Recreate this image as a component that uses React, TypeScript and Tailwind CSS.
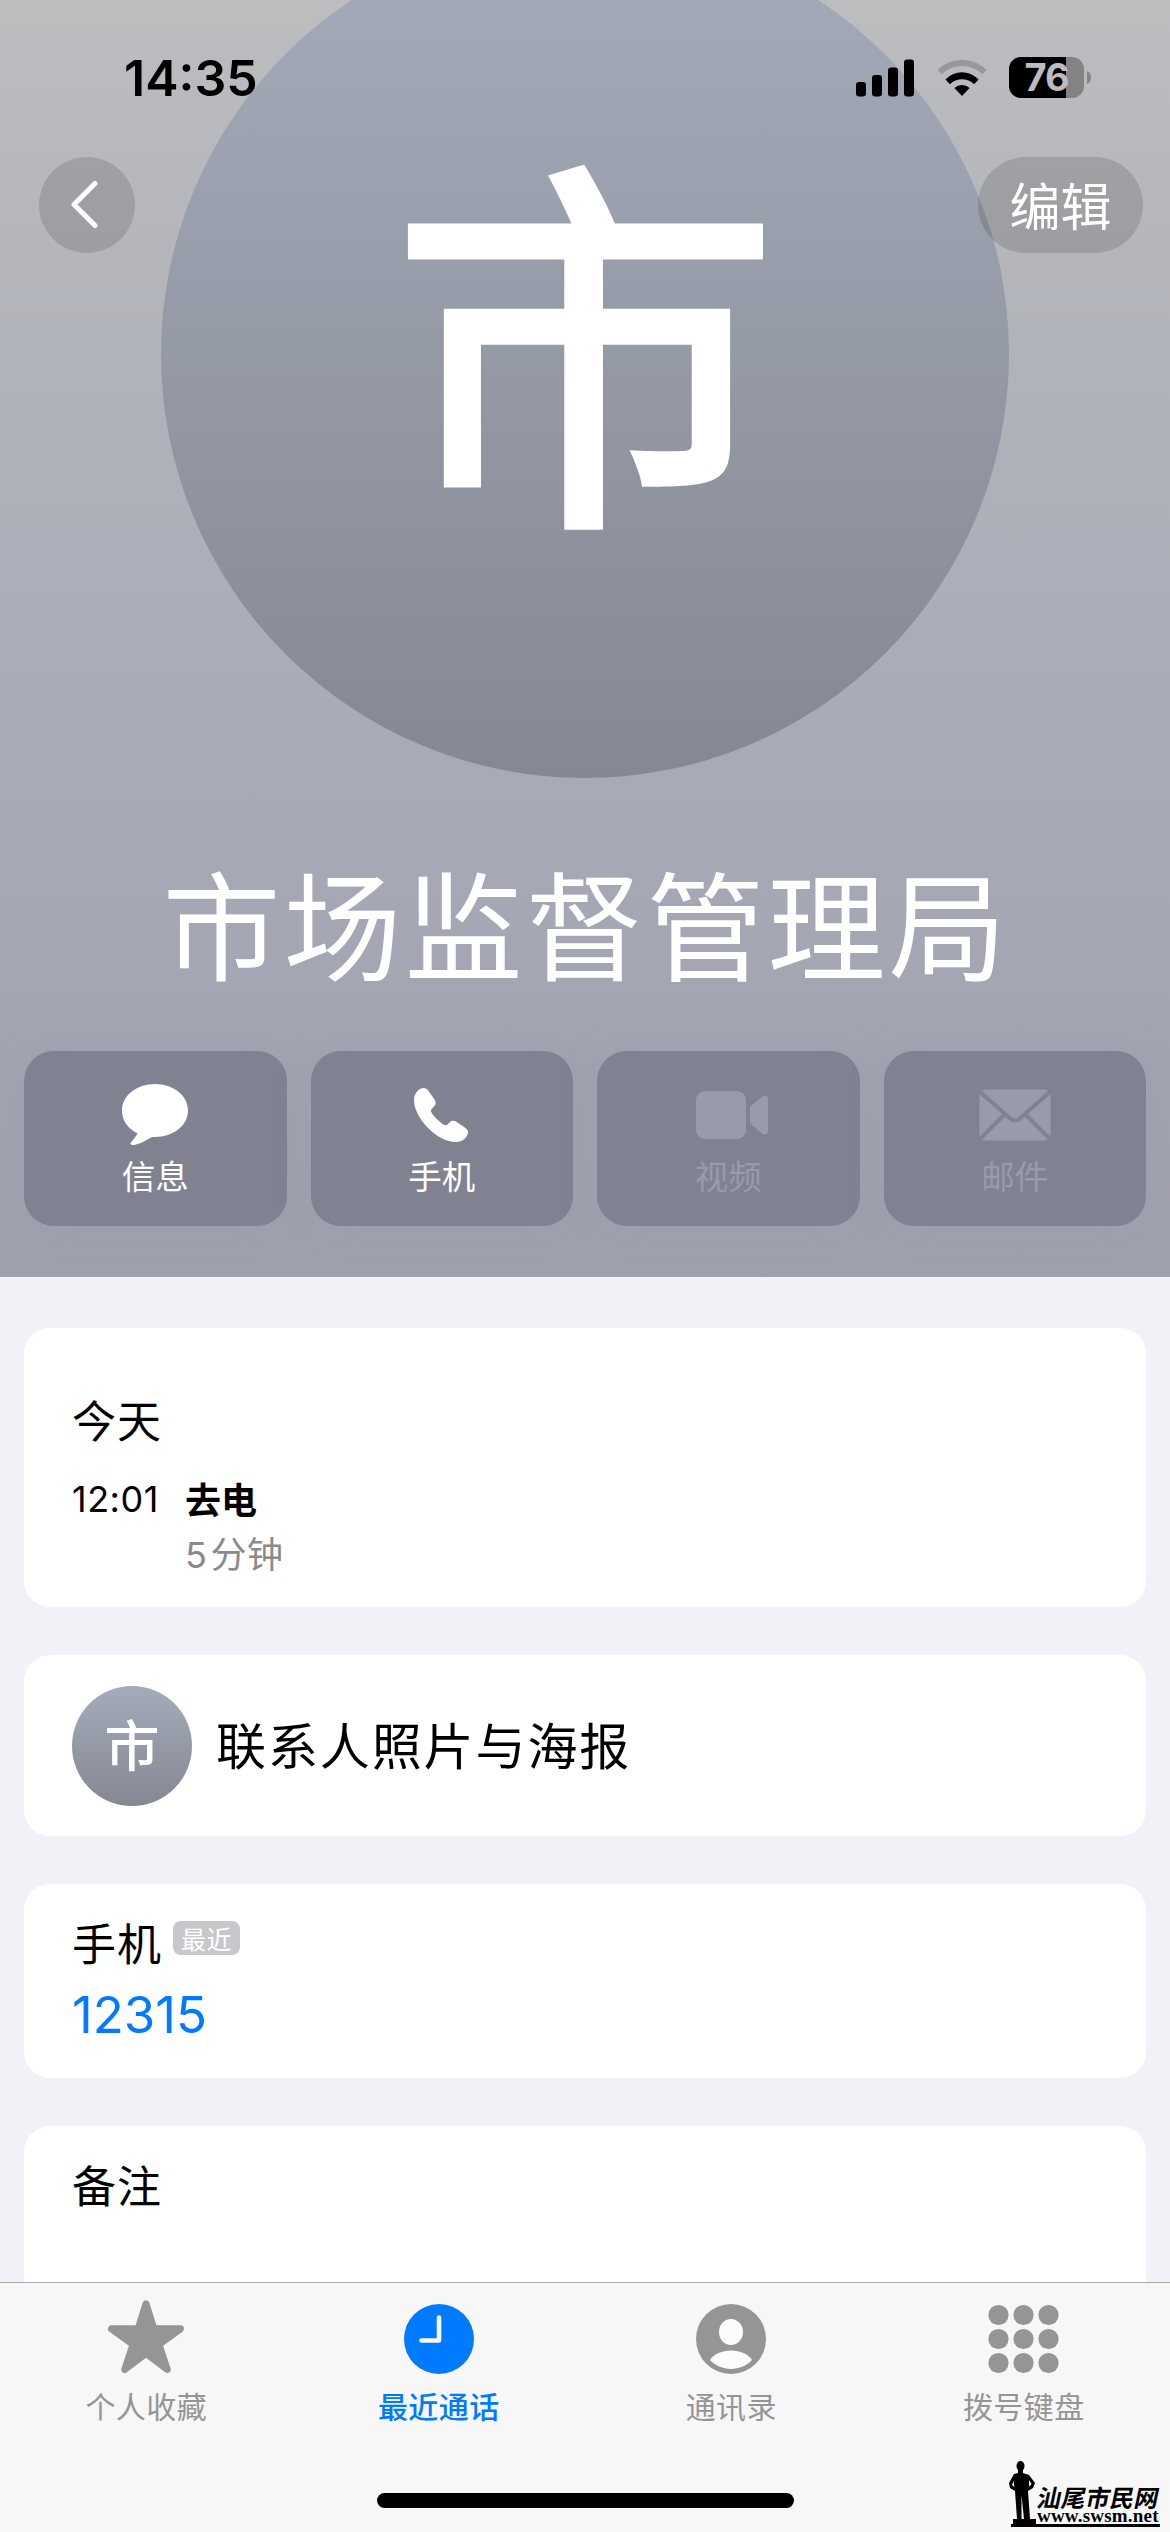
import React from "react";

const CJK = "font-['Noto_Sans_CJK_SC',sans-serif]";

function SignalIcon() {
  return (
    <svg className="h-[38px] w-[58px]" viewBox="0 0 58 38" fill="#000">
      <rect x="0" y="23" width="10" height="14.500" rx="3" />
      <rect x="16" y="16" width="10" height="21.500" rx="3" />
      <rect x="32" y="8.500" width="10" height="29" rx="3" />
      <rect x="48" y="0.500" width="10" height="37" rx="3" />
    </svg>
  );
}

function WifiIcon() {
  return (
    <svg className="h-[38px] w-[50px]" viewBox="0 0 50 38">
      <path d="M0.500 11 A34.500 34.500 0 0 1 49.500 11 L45.200 15.300 A28.500 28.500 0 0 0 4.800 15.300 Z" fill="#98989c" />
      <path d="M9 20.500 A22.500 22.500 0 0 1 41 20.500 L37 24.700 A17 17 0 0 0 13 24.700 Z" fill="#000" stroke="#000" strokeWidth="1" strokeLinejoin="round" />
      <path d="M17.400 29 A11 11 0 0 1 32.600 29 L25 37 Z" fill="#000" />
    </svg>
  );
}

function Battery() {
  return (
    <div className="flex items-center">
      <div className="flex h-[41px] w-[75px] items-center justify-center rounded-[12px] bg-[linear-gradient(to_right,#000_57px,#838386_57px)]">
        <span className="font-['Inter',sans-serif] text-[38px] leading-[41px] font-bold tracking-[-1px] text-[#bbbbc0]">76</span>
      </div>
      <svg className="ml-[3px] h-[13px] w-[4px]" viewBox="0 0 4 13">
        <path d="M0 0 C2.500 1 4 3.500 4 6.500 C4 9.500 2.500 12 0 13 Z" fill="#858588" />
      </svg>
    </div>
  );
}

function MessageIcon() {
  return (
    <svg className="h-[62px] w-[68px]" viewBox="0 0 68 62" fill="#fff">
      <path d="M34 0 C52.500 0 67 11.600 67 26.500 C67 41.400 52.500 53 34 53 C32.500 53 31 52.900 30 53.500 C25 56.500 18 60.500 12 61 C9.500 61.200 8.900 59.500 10.200 58 C13 55 15.200 52 16.500 49.500 C7 44.700 1 36.500 1 26.500 C1 11.600 15.500 0 34 0 Z" />
    </svg>
  );
}

function PhoneIcon() {
  return (
    <svg className="mr-[2px] h-[56px] w-[56px]" viewBox="0 0 56 56" fill="#fff">
      <path d="M1 13 C1 6 6 1 10.500 1 C13 1 14.500 2.500 15.500 4 L21.500 12.500 C23 15 23 17 21.500 19 L18.500 22 C17.500 23.200 18 24.500 18.500 25.500 C20.500 29 26.500 35 30.500 37.500 C32 38.500 33.500 38.500 34.500 37.500 L37 35 C38.500 33.500 41 33.500 43 34.500 L52.500 41 C54.500 42.500 55.200 44 55 46 C54 51 49 55 43 55 C24 55 1 31 1 13 Z" />
    </svg>
  );
}

function VideoIcon() {
  return (
    <svg className="ml-[7px] h-[50px] w-[74px]" viewBox="0 0 74 50" fill="#989ba9">
      <rect x="1" y="1" width="50" height="48" rx="9" />
      <path d="M55 17 L67 6.500 C70 4.500 73 5.500 73 9 V41 C73 44.500 70 45.500 67 43.500 L55 33.500 Z" />
    </svg>
  );
}

function MailIcon() {
  return (
    <svg className="h-[52px] w-[72px]" viewBox="0 0 72 52">
      <rect x="0.500" y="0.500" width="71" height="51" rx="6" fill="#989ba9" />
      <path d="M0 2 L30 28.500 C34 32.500 38 32.500 42 28.500 L72 2 M0 51 L25.500 25.500 M72 51 L46.500 25.500" fill="none" stroke="#808292" strokeWidth="4" />
    </svg>
  );
}

type Action = { label: string; icon: React.ReactNode; on: boolean };

const actions: Action[] = [
  { label: "信息", icon: <MessageIcon />, on: true },
  { label: "手机", icon: <PhoneIcon />, on: true },
  { label: "视频", icon: <VideoIcon />, on: false },
  { label: "邮件", icon: <MailIcon />, on: false },
];

function StarIcon() {
  return (
    <svg className="h-[76px] w-[78px]" viewBox="0 0 78 76" fill="#959595" stroke="#959595" strokeWidth="7" strokeLinejoin="round">
      <path d="M39 3.800 L46.800 28.500 L73.500 28.800 L52 44.500 L60.300 69.500 L39 53.500 L17.700 69.500 L26 44.500 L4.500 28.800 L31.200 28.500 Z" />
    </svg>
  );
}

function ClockIcon() {
  return (
    <svg className="h-[76px] w-[70px]" viewBox="0 0 70 76">
      <circle cx="35" cy="39" r="35" fill="#007aff" />
      <path d="M35 17.500 V40.500 H17.500" fill="none" stroke="#f7f7f7" strokeWidth="4.600" strokeLinecap="round" strokeLinejoin="round" />
    </svg>
  );
}

function PersonIcon() {
  return (
    <svg className="h-[76px] w-[70px]" viewBox="0 0 70 76">
      <circle cx="35" cy="39" r="35" fill="#959595" />
      <ellipse cx="35" cy="32" rx="12" ry="13" fill="#fcfcfc" />
      <path d="M14 60 C18 54 26 50.500 35 50.500 C44 50.500 52 54 56 60 C51 65.500 43 69 35 69 C27 69 19 65.500 14 60 Z" fill="#fcfcfc" />
    </svg>
  );
}

function KeypadIcon() {
  const at = [10.500, 35.500, 60.500];
  return (
    <svg className="h-[76px] w-[71px]" viewBox="0 0 71 76" fill="#959595">
      {[15, 39, 63].map((y) => at.map((x) => <circle key={`${x}-${y}`} cx={x} cy={y} r="10.100" />))}
    </svg>
  );
}

const tabs = [
  { label: "个人收藏", icon: <StarIcon />, active: false },
  { label: "最近通话", icon: <ClockIcon />, active: true },
  { label: "通讯录", icon: <PersonIcon />, active: false },
  { label: "拨号键盘", icon: <KeypadIcon />, active: false },
];

function Watermark() {
  return (
    <div className="absolute right-[10px] bottom-[5px] flex h-[67px] w-[151px] flex-col">
      <div className="flex flex-1 items-end">
        <svg className="h-[63px] w-[28px] shrink-0" viewBox="0 0 28 63" fill="#000">
          <ellipse cx="11.500" cy="5" rx="4" ry="5" />
          <path d="M9 9 H14 V12 L20 14 L26 22 L24 27 L19 30 L21 58 H27 V63 H4 V58 H8 L6 30 L1 27 L0 22 L5 13 L9 12 Z" />
          <path d="M4.500 20 L3 24 L5.500 26 Z M20 19 L22.500 23 L20 25.500 Z M12.500 34 L12.500 58 H15 Z" fill="#f8f8f8" />
        </svg>
        <div className="flex flex-col">
          <span className={`${CJK} mb-[1px] ml-[1px] -skew-x-12 text-[24px] leading-[24px] font-bold tracking-[0.3px] whitespace-nowrap`}>汕尾市民网</span>
          <span className="mb-[2px] font-['Liberation_Serif',serif] text-[19px] leading-[12px] font-bold tracking-[0.2px]">www.swsm.net</span>
        </div>
      </div>
      <div className="ml-[2px] h-[3px] bg-black" />
    </div>
  );
}

export default function App() {
  return (
    <div className={`${CJK} relative flex h-[2532px] w-[1170px] flex-col overflow-hidden bg-[#f2f1f7] text-black`}>
      <header className="relative isolate flex h-[1277px] shrink-0 flex-col overflow-hidden bg-[linear-gradient(to_bottom,#bdbdc0_0%,#b3b5bb_22%,#a9abb8_55%,#9fa0ad_100%)]">
        <div className="absolute top-[-70px] left-[161px] -z-10 flex h-[848px] w-[848px] items-center justify-center rounded-full bg-[linear-gradient(to_bottom,#a5abba,#858893)] pb-[54px]">
          <span className="text-[391px] leading-none font-medium text-white">市</span>
        </div>
        <div className="flex h-[157px] items-start justify-between pr-[79px] pl-[124px]">
          <span className="mt-[47px] font-['Inter',sans-serif] text-[50px] leading-[62px] font-semibold">14:35</span>
          <div className="mt-[57px] flex h-[41px] items-center">
            <SignalIcon />
            <span className="w-[23px]" />
            <WifiIcon />
            <span className="w-[22px]" />
            <Battery />
          </div>
        </div>
        <div className="flex justify-between pr-[27px] pl-[39px]">
          <button className="flex h-[96px] w-[96px] items-center justify-center rounded-full bg-[#000]/13">
            <svg className="mr-[7px] h-[54px] w-[28px]" viewBox="0 0 28 54" fill="none" stroke="#fff" strokeWidth="5" strokeLinecap="round" strokeLinejoin="round">
              <path d="M25 5.500 L4 26.500 L25 47.500" />
            </svg>
          </button>
          <button className="flex h-[96px] w-[165px] items-center justify-center rounded-full bg-[#000]/13 pb-[2px] text-[51px] text-white">编辑</button>
        </div>
        <h1 className="mt-[579px] flex h-[178px] items-center justify-center pl-[2px] text-[118px] leading-none font-normal tracking-[3px] whitespace-nowrap text-white">市场监督管理局</h1>
        <div className="mt-[41px] grid grid-cols-4 gap-6 px-6">
          {actions.map((a) => (
            <button key={a.label} className="flex h-[175px] flex-col items-center rounded-[30px] bg-[#808292] shadow-[0_0_40px_rgba(128,130,146,0.12)]">
              <span className="mt-[32px] flex h-[64px] items-center justify-center">{a.icon}</span>
              <span className={a.on ? "mt-[6px] text-[33.5px] leading-[44px] text-white" : "mt-[6px] text-[33.5px] leading-[44px] text-[#989ba9]"}>{a.label}</span>
            </button>
          ))}
        </div>
      </header>

      <main className="flex flex-col gap-12 px-6 pt-[51px]">
        <section className="flex h-[279px] flex-col rounded-[26px] bg-white px-[48px] pt-[58px]">
          <h2 className="text-[44px] leading-[66px] tracking-[1px]">今天</h2>
          <div className="mt-[19px] flex text-[36px] leading-[54px]">
            <span className="w-[113px] pt-px font-['Inter',sans-serif] tracking-[0.5px]">12:01</span>
            <div className="flex flex-col">
              <span className="font-bold">去电</span>
              <span className="tracking-[0.5px] text-[#8a8a8e]"><span className="mr-[3px] font-['Inter',sans-serif]">5</span>分钟</span>
            </div>
          </div>
        </section>
        <section className="flex h-[181px] items-center rounded-[26px] bg-white px-[48px]">
          <span className="flex h-[120px] w-[120px] items-center justify-center rounded-full bg-[linear-gradient(to_bottom,#a5abba,#858893)] pb-[6px] text-[55px] leading-none font-medium text-white">市</span>
          <span className="ml-[24px] pb-[4px] text-[50px] tracking-[1.900px]">联系人照片与海报</span>
        </section>
        <section className="flex h-[194px] flex-col rounded-[26px] bg-white px-[48px] pt-[25px]">
          <div className="flex items-start">
            <span className="text-[44px] leading-[66px] tracking-[1px]">手机</span>
            <span className="mt-[12px] ml-[11px] flex h-[34px] w-[67px] items-center justify-center rounded-[8px] bg-[#c7c7cc] text-[25px] leading-none tracking-[0.5px] text-white">最近</span>
          </div>
          <span className="mt-[2px] font-['Inter',sans-serif] text-[51px] leading-[76px] text-[#007aff]">12315</span>
        </section>
        <section className="flex h-[194px] flex-col rounded-[26px] bg-white px-[48px] pt-[25px]">
          <span className="text-[44px] leading-[66px] tracking-[1px]">备注</span>
        </section>
      </main>

      <nav className="absolute inset-x-0 bottom-0 h-[250px] border-t border-[#a9a9ac] bg-[#f7f7f8]">
        <div className="grid grid-cols-4">
          {tabs.map((t) => (
            <div key={t.label} className="flex flex-col items-center pt-[17px]">
              {t.icon}
              <span className={t.active ? "mt-[7px] text-[30px] leading-[44px] font-medium tracking-[0.4px] text-[#007aff]" : "mt-[7px] text-[30px] leading-[44px] font-normal tracking-[0.4px] text-[#959595]"}>{t.label}</span>
            </div>
          ))}
        </div>
        <div className="absolute bottom-[24px] left-[377px] h-[15px] w-[417px] rounded-full bg-black" />
        <Watermark />
      </nav>
    </div>
  );
}
